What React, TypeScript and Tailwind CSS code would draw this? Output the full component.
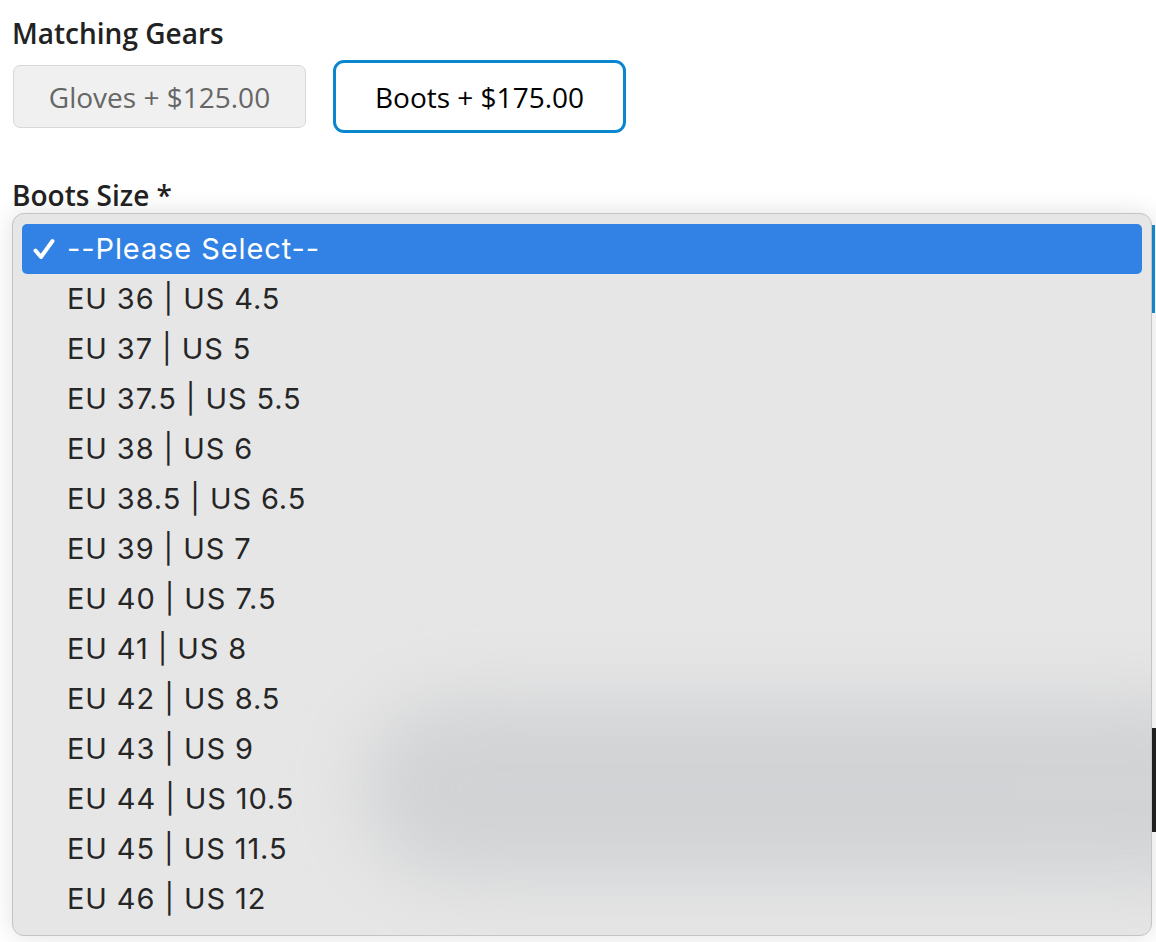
import React from 'react';

const sizes = [
  'EU 36 | US 4.5',
  'EU 37 | US 5',
  'EU 37.5 | US 5.5',
  'EU 38 | US 6',
  'EU 38.5 | US 6.5',
  'EU 39 | US 7',
  'EU 40 | US 7.5',
  'EU 41 | US 8',
  'EU 42 | US 8.5',
  'EU 43 | US 9',
  'EU 44 | US 10.5',
  'EU 45 | US 11.5',
  'EU 46 | US 12',
];

function Check() {
  return (
    <svg width="22" height="22" viewBox="0 0 22 22" className="shrink-0">
      <path d="M2.5 12.5 L8 19 L19.5 3" fill="none" stroke="white" strokeWidth="4" strokeLinecap="round" strokeLinejoin="round" />
    </svg>
  );
}

export default function App() {
  return (
    <div className="relative min-h-screen overflow-hidden bg-white font-['Open_Sans',sans-serif]">
      {/* bits of the page behind the open select */}
      <div className="absolute left-[1152px] top-[225px] h-[88px] w-[3px] bg-[#1a8ad4]" />
      <div className="absolute left-[1152px] top-[728px] h-[104px] w-[4px] bg-[#222]" />

      <div className="px-3 pt-[14px]">
        <h2 className="text-[28px] font-semibold leading-[38px] text-[#222]">Matching Gears</h2>

        <div className="mt-2 flex items-center gap-[27px] pl-[1px]">
          <button className="flex h-[63px] w-[293px] items-center justify-center rounded-[7px] border border-[#d8d8d8] bg-[#f0f0f0] text-[28px] font-medium text-[#666]">
            Gloves + $125.00
          </button>
          <button className="flex h-[73px] w-[293px] items-center justify-center rounded-[11px] border-[3px] border-[#0a86cf] bg-white text-[28px] font-medium text-black">
            Boots + $175.00
          </button>
        </div>

        <div className="mt-[44px] h-[36px] text-[28px] font-semibold leading-[36px] text-[#222]">Boots Size *</div>

        <div className="relative w-[1140px] overflow-hidden rounded-[12px] border border-[#c4c4c4] bg-[#e6e6e6] px-[9px] pt-[10px] pb-[11px] shadow-[0_0_24px_rgba(0,0,0,0.12)] font-['Inter',sans-serif]">
          <div className="absolute left-[350px] top-[485px] h-[180px] w-[900px] rounded-full bg-[#c9cbce] opacity-70 blur-[36px]" />
          <div className="relative flex h-[50px] items-center gap-[12px] rounded-[5px] bg-[#3182e4] pl-[11px] text-[29px] tracking-[0.9px] text-white">
            <Check />
            <span>--Please Select--</span>
          </div>
          {sizes.map((s) => (
            <div key={s} className="relative flex h-[50px] items-center pl-[45px] text-[29px] tracking-[0.9px] text-[#262626]">
              {s}
            </div>
          ))}
        </div>
      </div>
    </div>
  );
}
